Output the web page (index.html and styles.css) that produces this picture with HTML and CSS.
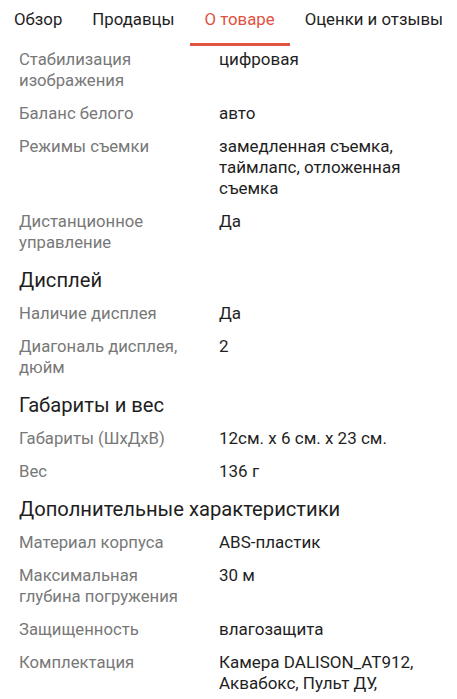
FILE: index.html
```html
<!DOCTYPE html>
<html lang="ru">
<head>
<meta charset="utf-8">
<link rel="stylesheet" href="styles.css">
</head>
<body>
<nav class="tabs">
  <div class="tab">Обзор</div>
  <div class="tab">Продавцы</div>
  <div class="tab active">О товаре</div>
  <div class="tab">Оценки и отзывы</div>
</nav>
<main class="specs">
  <div class="row"><div class="label">Стабилизация изображения</div><div class="value">цифровая</div></div>
  <div class="row"><div class="label">Баланс белого</div><div class="value">авто</div></div>
  <div class="row"><div class="label">Режимы съемки</div><div class="value">замедленная съемка, таймлапс, отложенная съемка</div></div>
  <div class="row"><div class="label">Дистанционное управление</div><div class="value">Да</div></div>
  <h2 class="section">Дисплей</h2>
  <div class="row"><div class="label">Наличие дисплея</div><div class="value">Да</div></div>
  <div class="row"><div class="label">Диагональ дисплея, дюйм</div><div class="value">2</div></div>
  <h2 class="section">Габариты и вес</h2>
  <div class="row"><div class="label">Габариты (ШхДхВ)</div><div class="value">12см. х 6 см. х 23 см.</div></div>
  <div class="row"><div class="label">Вес</div><div class="value">136 г</div></div>
  <h2 class="section">Дополнительные характеристики</h2>
  <div class="row"><div class="label">Материал корпуса</div><div class="value">ABS-пластик</div></div>
  <div class="row"><div class="label">Максимальная глубина погружения</div><div class="value">30 м</div></div>
  <div class="row"><div class="label">Защищенность</div><div class="value">влагозащита</div></div>
  <div class="row"><div class="label">Комплектация</div><div class="value">Камера DALISON_AT912, Аквабокс, Пульт ДУ,</div></div>
</main>
</body>
</html>
```
FILE: styles.css
```css
html, body {
  margin: 0;
  padding: 0;
  background: #fff;
  overflow: hidden;
}
body {
  font-family: Roboto, "Noto Sans", sans-serif;
  color: #212121;
  width: 457px;
  height: 699px;
}
.tabs {
  display: flex;
  height: 46px;
  margin-left: -1px;
  white-space: nowrap;
}
.tab {
  padding: 0 15px;
  font-size: 16.8px;
  line-height: 38px;
  color: #1e1e1e;
  border-bottom: 3px solid transparent;
  box-sizing: border-box;
  height: 46px;
}
.tab.active {
  color: #e0523f;
  border-bottom-color: #df5440;
}
.specs {
  padding: 0 19px;
  margin-top: -3px;
}
.row {
  display: grid;
  grid-template-columns: 176px 1fr;
  column-gap: 24px;
  padding: 6px 0;
  line-height: 21px;
}
.label {
  color: #787878;
  font-size: 16.7px;
}
.value {
  color: #1f1f1f;
  font-size: 17px;
}
.section {
  margin: 0;
  padding: 8px 0 4px;
  font-size: 20.2px;
  line-height: 26px;
  font-weight: 400;
  color: #1e1e1e;
}
```
